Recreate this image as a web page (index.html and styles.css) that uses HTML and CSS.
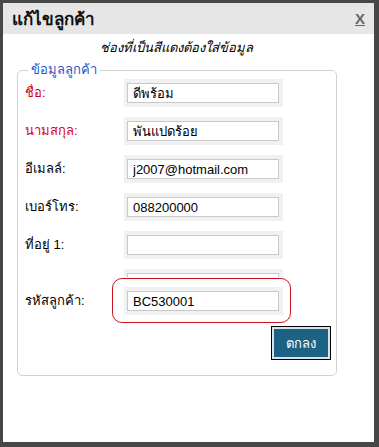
FILE: index.html
```html
<!DOCTYPE html>
<html lang="th">
<head>
<meta charset="utf-8">
<title>แก้ไขลูกค้า</title>
<link rel="stylesheet" href="styles.css">
</head>
<body>
<div class="dialog">
  <div class="titlebar">
    <span class="title">แก้ไขลูกค้า</span>
    <span class="close">X</span>
  </div>
  <p class="hint">ช่องที่เป็นสีแดงต้องใส่ข้อมูล</p>
  <fieldset class="group">
    <legend>ข้อมูลลูกค้า</legend>
    <div class="rows">
      <label class="lbl req">ชื่อ:</label>
      <div class="field"><input type="text" value="ดีพร้อม"></div>
      <label class="lbl req">นามสกุล:</label>
      <div class="field"><input type="text" value="พันแปดร้อย"></div>
      <label class="lbl">อีเมลล์:</label>
      <div class="field"><input type="text" value="j2007@hotmail.com"></div>
      <label class="lbl">เบอร์โทร:</label>
      <div class="field"><input type="text" value="088200000"></div>
      <label class="lbl">ที่อยู่ 1:</label>
      <div class="field"><input type="text" value=""></div>
      <span class="lbl cut"></span>
      <div class="field cut"><input type="text" value=""></div>
      <label class="lbl code">รหัสลูกค้า:</label>
      <div class="field mark"><input type="text" value="BC530001"></div>
    </div>
    <div class="actions"><button type="button" class="ok">ตกลง</button></div>
  </fieldset>
</div>
</body>
</html>
```

FILE: styles.css
```css
html, body {
  margin: 0;
  padding: 0;
}
body {
  background: #474747;
  width: 379px;
  height: 447px;
  overflow: hidden;
  font-family: Tahoma, "Liberation Sans", "Noto Sans", sans-serif;
  font-size: 13px;
  color: #000;
}
.dialog {
  margin: 3px 5px 0 3px;
  height: 439px;
  background: #fff;
  display: flex;
  flex-direction: column;
}
.titlebar {
  height: 31px;
  background: #e6e6e6;
  display: flex;
  align-items: center;
  justify-content: space-between;
  padding: 0 9px 0 9px;
}
.title {
  font-size: 17px;
  font-weight: bold;
  color: #111;
}
.close {
  font-size: 15px;
  font-weight: bold;
  color: #666;
  text-decoration: underline;
}
.hint {
  margin: 6px 0 0 0;
  text-align: center;
  font-style: italic;
  padding-right: 24px;
  line-height: 16px;
}
.group {
  margin: 6px 0 0 14px;
  width: 320px;
  box-sizing: border-box;
  border: 1px solid #d2d2d2;
  border-radius: 5px;
  padding: 0 6px 15px 7px;
  min-width: 0;
}
.group legend {
  color: #2a55c8;
  padding: 0 3px;
  margin-left: 3px;
  line-height: 16px;
}
.rows {
  display: grid;
  grid-template-columns: 99px 159px;
  row-gap: 10px;
  align-items: center;
  margin-top: 1px;
}
.lbl {
  line-height: 16px;
}
.req {
  color: #d0021b;
}
.field {
  background: #f1f1f1;
  padding: 4px 4px 4px 3px;
  position: relative;
}
.field input {
  display: block;
  box-sizing: border-box;
  width: 152px;
  height: 20px;
  margin: 0;
  border: 1px solid #c8c8c8;
  background: #fff;
  padding: 1px 0 0 5px;
  font-family: inherit;
  font-size: 13px;
  color: #000;
}
.field.cut {
  height: 4px;
  padding-bottom: 0;
  overflow: hidden;
}
.lbl.cut {
  height: 4px;
}
.field.mark::after {
  content: "";
  position: absolute;
  left: -12px;
  right: -8px;
  top: -9px;
  bottom: -8px;
  border: 1px solid #c8141e;
  border-radius: 10px;
}
.actions {
  display: flex;
  justify-content: flex-end;
  margin-top: 11px;
}
.ok {
  width: 60px;
  height: 34px;
  border: 1px solid #000;
  box-shadow: inset 0 0 0 2px #d8e4ea;
  background: #1c6284;
  color: #fff;
  font-family: inherit;
  font-size: 13px;
  padding: 0;
  margin-right: -1px;
}
```
